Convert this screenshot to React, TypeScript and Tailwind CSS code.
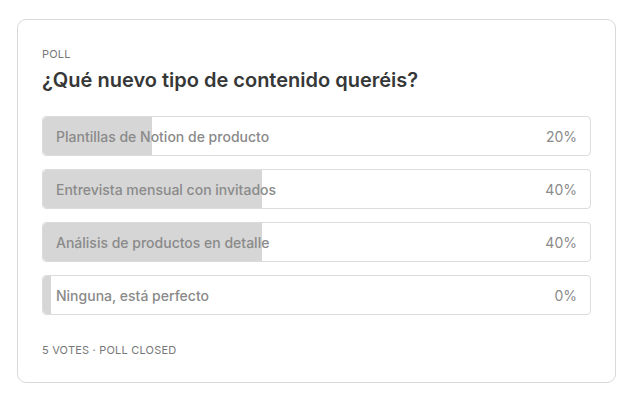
const options = [
  { label: 'Plantillas de Notion de producto', pct: 20 },
  { label: 'Entrevista mensual con invitados', pct: 40 },
  { label: 'Análisis de productos en detalle', pct: 40 },
  { label: 'Ninguna, está perfecto', pct: 0 },
];

export default function App() {
  return (
    <div className="w-[639px] h-[404px] bg-white pt-[19px] pl-[17px] font-['Inter',sans-serif]">
      <div className="w-[599px] border border-[#d9d9d9] rounded-[9px] pl-6 pr-6 pt-[27px] pb-[25px]">
        <div className="text-[11px] leading-[14px] tracking-[0.2px] text-[#777]">POLL</div>
        <h2 className="mt-[6px] text-[20px] leading-[26px] font-semibold text-[#363737]">
          ¿Qué nuevo tipo de contenido queréis?
        </h2>
        <div className="mt-[23px] flex flex-col gap-[13px]">
          {options.map((o) => (
            <div
              key={o.label}
              className="relative h-10 rounded-[4px] border border-[#dcdcdc] overflow-hidden"
            >
              <div
                className="absolute left-0 top-0 bottom-0 bg-[#d6d6d6] rounded-l-[4px]"
                style={{ width: o.pct === 0 ? 8 : `${o.pct}%` }}
              />
              <div className="relative flex h-full items-center justify-between px-[13px] text-[14px] text-[#8a8a8a] font-medium">
                <span>{o.label}</span>
                <span className="font-normal">{o.pct}%</span>
              </div>
            </div>
          ))}
        </div>
        <div className="mt-[28px] text-[11px] leading-[14px] tracking-[0.2px] text-[#777]">
          5 VOTES · POLL CLOSED
        </div>
      </div>
    </div>
  );
}
